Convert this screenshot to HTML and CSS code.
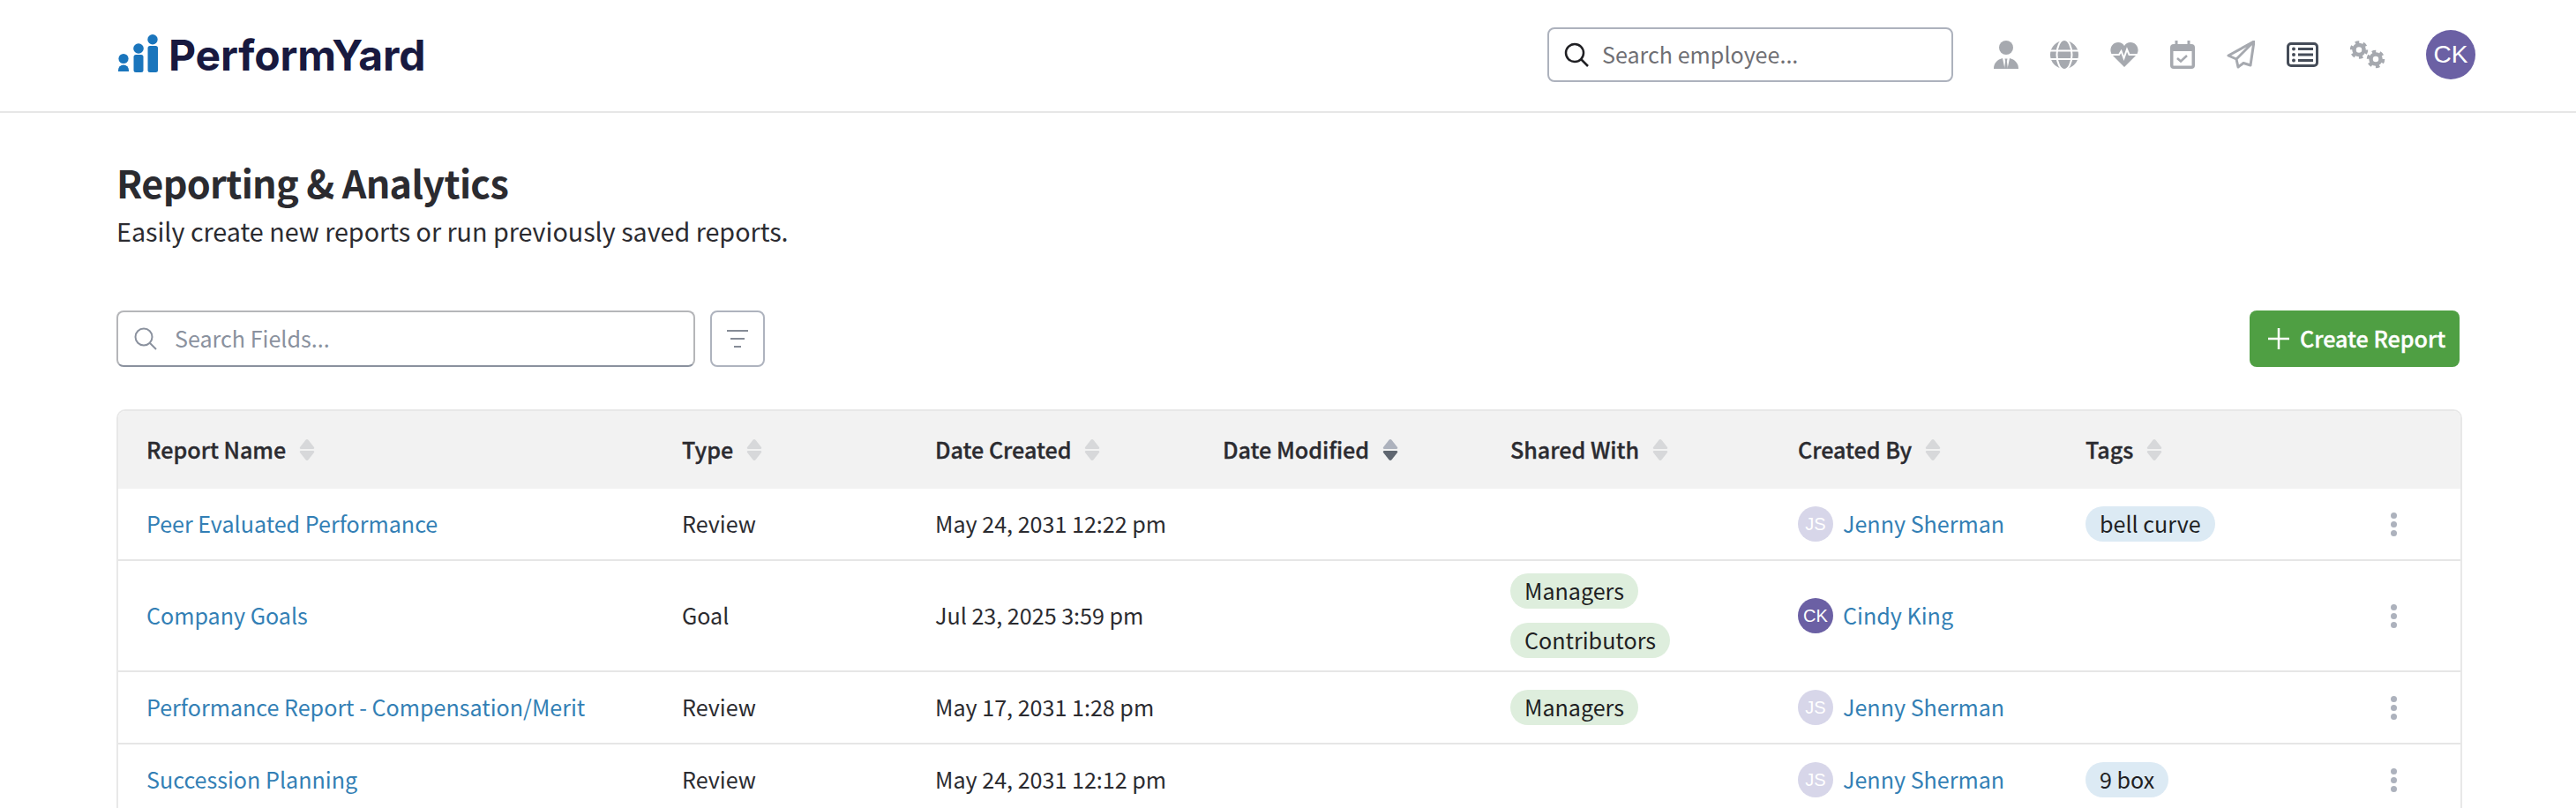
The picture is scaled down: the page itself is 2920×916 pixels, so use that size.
FILE: index.html
```html
<!DOCTYPE html>
<html lang="en">
<head>
<meta charset="utf-8">
<title>Reporting &amp; Analytics</title>
<link rel="stylesheet" href="styles.css">
</head>
<body>
<header class="topbar">
  <a class="logo">
    <svg class="logo-mark" width="45" height="43" viewBox="0 0 45 43"><g fill="#1a75bc"><circle cx="6" cy="27.5" r="5.6"/><path d="M0 43v-1.500a6 6 0 0 1 12 0V43z" transform="translate(0 -1)"/><circle cx="23" cy="16" r="5.8"/><rect x="17.500" y="23" width="11" height="20" rx="2.500"/><circle cx="39" cy="5.700" r="5.700"/><rect x="33.500" y="13" width="11.500" height="30" rx="2.500"/></g></svg>
    <span class="logo-text">PerformYard</span>
  </a>
  <label class="emp-search">
    <svg width="28" height="28" viewBox="0 0 28 28" fill="none" stroke="#1f1f23" stroke-width="2.500"><circle cx="12" cy="12" r="10"/><path d="M19 19l8 8"/></svg>
    <span>Search employee...</span>
  </label>
  <nav class="icons">
    <svg width="28" height="32" viewBox="0 0 28 32" fill="#a6a9af"><circle cx="14" cy="8" r="8"/><path d="M0 32c0-6.500 4-10.500 10-12l2.500 12zM28 32c0-6.500-4-10.500-10-12l-2.500 12z"/><path d="M12.500 20.500h3l-.6 3 1.100 8.500h-4l1.100-8.500z"/></svg>
    <svg width="32" height="32" viewBox="0 0 32 32"><circle cx="16" cy="16" r="16" fill="#a6a9af"/><g fill="none" stroke="#fff" stroke-width="2"><ellipse cx="16" cy="16" rx="8.500" ry="17"/><path d="M0 11.500h32M0 21h32"/></g></svg>
    <svg width="32" height="28" viewBox="0 0 32 28"><path fill="#a6a9af" d="M16 28 2 14C-2 8 2 0 9 0c3 0 5.500 1.500 7 4 1.500-2.500 4-4 7-4 7 0 11 8 7 14z"/><path fill="none" stroke="#fff" stroke-width="2" d="M0 14h10l2.500-4 3 8 3.500-10 2.500 6H32"/></svg>
    <svg width="28" height="32" viewBox="0 0 28 32"><rect y="4" width="28" height="28" rx="4" fill="#a6a9af"/><path stroke="#a6a9af" stroke-width="3" d="M7 0v6M21 0v6"/><rect x="3.500" y="12" width="21" height="16.500" fill="#fff"/><path fill="none" stroke="#a6a9af" stroke-width="2.500" d="M8 20l4 3.500 7-6.500"/></svg>
    <svg width="32" height="32" viewBox="0 0 32 32" fill="none" stroke="#a6a9af" stroke-width="3" stroke-linejoin="round"><path d="M31 1 2 17l9 4 2 9 6-4.500 8 2.500zM31 1 11 21"/></svg>
    <svg width="36" height="28" viewBox="0 0 36 28"><rect x="1.500" y="1.500" width="33" height="25" rx="3.500" fill="#fff" stroke="#454c58" stroke-width="3"/><g fill="#454c58"><circle cx="8" cy="7.500" r="2"/><circle cx="8" cy="14" r="2"/><circle cx="8" cy="20.500" r="2"/><rect x="13" y="6" width="17" height="3"/><rect x="13" y="12.500" width="17" height="3"/><rect x="13" y="19" width="17" height="3"/></g></svg>
    <svg width="40" height="32" viewBox="0 0 40 32" fill="none" stroke="#a6a9af"><g><circle cx="10" cy="10.500" r="5.500" stroke-width="4.500"/><circle cx="10" cy="10.500" r="8.500" stroke-width="3.500" stroke-dasharray="4.450 4.450"/></g><g><circle cx="29" cy="21" r="5.500" stroke-width="4.500"/><circle cx="29" cy="21" r="8.500" stroke-width="3.500" stroke-dasharray="4.450 4.450"/></g></svg>
  </nav>
  <div class="avatar avatar-lg">CK</div>
</header>

<main class="page">
  <h1 class="title">Reporting &amp; Analytics</h1>
  <p class="subtitle">Easily create new reports or run previously saved reports.</p>

  <div class="toolbar">
    <label class="field-search">
      <svg width="26" height="26" viewBox="0 0 26 26" fill="none" stroke="#8a919e" stroke-width="2"><circle cx="11" cy="11" r="9.500"/><path d="M18 18l7 7"/></svg>
      <span>Search Fields...</span>
    </label>
    <button class="filter-btn" type="button">
      <svg width="24" height="20" viewBox="0 0 24 20" fill="#858b96"><rect width="24" height="2"/><rect x="4" y="9" width="16" height="2"/><rect x="8" y="18" width="8" height="2"/></svg>
    </button>
    <button class="create-btn" type="button">
      <svg width="24" height="24" viewBox="0 0 24 24" stroke="#fff" stroke-width="2.500"><path d="M12 0v24M0 12h24"/></svg>
      <span>Create Report</span>
    </button>
  </div>

  <div class="table-wrap">
    <table class="reports">
      <colgroup>
        <col class="c-name"><col class="c-type"><col class="c-date"><col class="c-date"><col class="c-date"><col class="c-date"><col class="c-date"><col class="c-menu">
      </colgroup>
      <thead>
        <tr>
          <th><span class="th">Report Name<svg class="sort" width="18" height="24" viewBox="0 0 18 24"><path class="up" d="M9 0c.6 0 1.100.3 1.500.8L17 9c.6.8.1 2-1 2H2C.9 11 .4 9.800 1 9L7.500.8C7.900.3 8.400 0 9 0z"/><path class="down" d="M9 24c.6 0 1.100-.3 1.500-.8L17 15c.6-.8.1-2-1-2H2c-1.100 0-1.600 1.200-1 2l6.500 8.200c.4.500.9.800 1.500.8z"/></svg></span></th>
          <th><span class="th">Type<svg class="sort" width="18" height="24" viewBox="0 0 18 24"><path class="up" d="M9 0c.6 0 1.100.3 1.500.8L17 9c.6.8.1 2-1 2H2C.9 11 .4 9.800 1 9L7.500.8C7.900.3 8.400 0 9 0z"/><path class="down" d="M9 24c.6 0 1.100-.3 1.500-.8L17 15c.6-.8.1-2-1-2H2c-1.100 0-1.600 1.200-1 2l6.500 8.200c.4.500.9.800 1.500.8z"/></svg></span></th>
          <th><span class="th">Date Created<svg class="sort" width="18" height="24" viewBox="0 0 18 24"><path class="up" d="M9 0c.6 0 1.100.3 1.500.8L17 9c.6.8.1 2-1 2H2C.9 11 .4 9.800 1 9L7.500.8C7.900.3 8.400 0 9 0z"/><path class="down" d="M9 24c.6 0 1.100-.3 1.500-.8L17 15c.6-.8.1-2-1-2H2c-1.100 0-1.600 1.200-1 2l6.500 8.200c.4.500.9.800 1.500.8z"/></svg></span></th>
          <th><span class="th">Date Modified<svg class="sort sort-active" width="18" height="24" viewBox="0 0 18 24"><path class="up" d="M9 0c.6 0 1.100.3 1.500.8L17 9c.6.8.1 2-1 2H2C.9 11 .4 9.800 1 9L7.500.8C7.900.3 8.400 0 9 0z"/><path class="down" d="M9 24c.6 0 1.100-.3 1.500-.8L17 15c.6-.8.1-2-1-2H2c-1.100 0-1.600 1.200-1 2l6.500 8.200c.4.500.9.800 1.500.8z"/></svg></span></th>
          <th><span class="th">Shared With<svg class="sort" width="18" height="24" viewBox="0 0 18 24"><path class="up" d="M9 0c.6 0 1.100.3 1.500.8L17 9c.6.8.1 2-1 2H2C.9 11 .4 9.800 1 9L7.500.8C7.900.3 8.400 0 9 0z"/><path class="down" d="M9 24c.6 0 1.100-.3 1.500-.8L17 15c.6-.8.1-2-1-2H2c-1.100 0-1.600 1.200-1 2l6.500 8.200c.4.500.9.800 1.500.8z"/></svg></span></th>
          <th><span class="th">Created By<svg class="sort" width="18" height="24" viewBox="0 0 18 24"><path class="up" d="M9 0c.6 0 1.100.3 1.500.8L17 9c.6.8.1 2-1 2H2C.9 11 .4 9.800 1 9L7.500.8C7.900.3 8.400 0 9 0z"/><path class="down" d="M9 24c.6 0 1.100-.3 1.500-.8L17 15c.6-.8.1-2-1-2H2c-1.100 0-1.600 1.200-1 2l6.500 8.200c.4.500.9.800 1.500.8z"/></svg></span></th>
          <th><span class="th">Tags<svg class="sort" width="18" height="24" viewBox="0 0 18 24"><path class="up" d="M9 0c.6 0 1.100.3 1.500.8L17 9c.6.8.1 2-1 2H2C.9 11 .4 9.800 1 9L7.500.8C7.900.3 8.400 0 9 0z"/><path class="down" d="M9 24c.6 0 1.100-.3 1.500-.8L17 15c.6-.8.1-2-1-2H2c-1.100 0-1.600 1.200-1 2l6.500 8.200c.4.500.9.800 1.500.8z"/></svg></span></th>
          <th></th>
        </tr>
      </thead>
      <tbody>
        <tr>
          <td><a class="link">Peer Evaluated Performance</a></td>
          <td>Review</td>
          <td>May 24, 2031 12:22 pm</td>
          <td></td>
          <td></td>
          <td><span class="person"><span class="avatar avatar-sm avatar-light">JS</span><a class="link">Jenny Sherman</a></span></td>
          <td><span class="pill pill-blue">bell curve</span></td>
          <td><span class="kebab"><i></i><i></i><i></i></span></td>
        </tr>
        <tr>
          <td><a class="link">Company Goals</a></td>
          <td>Goal</td>
          <td>Jul 23, 2025 3:59 pm</td>
          <td></td>
          <td><span class="pills"><span class="pill pill-green">Managers</span><span class="pill pill-green">Contributors</span></span></td>
          <td><span class="person"><span class="avatar avatar-sm">CK</span><a class="link">Cindy King</a></span></td>
          <td></td>
          <td><span class="kebab"><i></i><i></i><i></i></span></td>
        </tr>
        <tr>
          <td><a class="link">Performance Report - Compensation/Merit</a></td>
          <td>Review</td>
          <td>May 17, 2031 1:28 pm</td>
          <td></td>
          <td><span class="pill pill-green">Managers</span></td>
          <td><span class="person"><span class="avatar avatar-sm avatar-light">JS</span><a class="link">Jenny Sherman</a></span></td>
          <td></td>
          <td><span class="kebab"><i></i><i></i><i></i></span></td>
        </tr>
        <tr>
          <td><a class="link">Succession Planning</a></td>
          <td>Review</td>
          <td>May 24, 2031 12:12 pm</td>
          <td></td>
          <td></td>
          <td><span class="person"><span class="avatar avatar-sm avatar-light">JS</span><a class="link">Jenny Sherman</a></span></td>
          <td><span class="pill pill-blue">9 box</span></td>
          <td><span class="kebab"><i></i><i></i><i></i></span></td>
        </tr>
      </tbody>
    </table>
  </div>
</main>
</body>
</html>
```
FILE: styles.css
```css
* { box-sizing: border-box; }
html, body { margin: 0; height: 916px; overflow: hidden; }
body {
  background: #fff;
  color: #2b2b30;
  font-family: "Noto Sans CJK SC", "Noto Sans", sans-serif;
  font-size: 25.1px;
  line-height: 40px;
}

.topbar {
  display: flex;
  align-items: center;
  height: 128px;
  padding: 0 114px 2px 134px;
  border-bottom: 2px solid #e6e6e6;
}
.logo { display: flex; align-items: flex-start; gap: 12px; margin-right: auto; }
.logo-mark { display: block; margin-top: -3px; }
.logo-text {
  margin-top: 1px;
  font-family: Inter, "Liberation Sans", sans-serif;
  font-weight: 700;
  font-size: 48px;
  line-height: 40px;
  letter-spacing: -.15px;
  color: #18193f;
}
.emp-search {
  display: flex;
  align-items: center;
  gap: 15px;
  width: 460px;
  height: 62px;
  padding: 0 17px;
  border: 2px solid #adb2bd;
  border-radius: 8px;
  color: #6f6f74;
}
.emp-search span, .field-search span, .create-btn span { margin-top: -3px; }
.icons { display: flex; align-items: center; gap: 36px; margin: 0 46px; }
.icons svg { display: block; }

.avatar {
  display: flex;
  align-items: center;
  justify-content: center;
  flex: none;
  border-radius: 50%;
  background: #6b60a4;
  color: #fff;
  font-family: "Liberation Sans", sans-serif;
}
.avatar-lg { width: 56px; height: 56px; font-size: 28px; }
.avatar-sm { width: 40px; height: 40px; font-size: 20px; }
.avatar-light { background: #d7d6e9; }

.page { padding: 48px 129px 0 132px; }
.title { margin: 0; font-size: 43.2px; line-height: 60px; font-weight: 600; letter-spacing: -.7px; }
.subtitle { margin: 4px 0 0; font-size: 28.7px; line-height: 44px; }

.toolbar { display: flex; align-items: center; gap: 17px; margin: 68px 3px 0 0; }
.field-search {
  display: flex;
  align-items: center;
  gap: 20px;
  width: 656px;
  height: 64px;
  padding: 0 18px;
  border: 2px solid #b5b6b9;
  border-bottom-color: #8a919e;
  border-radius: 8px;
  color: #8a919e;
}
.filter-btn {
  display: flex;
  align-items: center;
  justify-content: center;
  width: 62px;
  height: 64px;
  padding: 0;
  background: #fff;
  border: 2px solid #aeb3be;
  border-radius: 8px;
}
.create-btn {
  display: flex;
  align-items: center;
  gap: 12px;
  width: 238px;
  height: 64px;
  margin-left: auto;
  padding: 0 0 0 21px;
  border: 0;
  border-radius: 8px;
  background: #4f9f43;
  color: #fff;
  white-space: nowrap;
  font: 500 25.1px/40px "Noto Sans CJK SC", "Noto Sans", sans-serif;
  -webkit-text-stroke: .35px #fff;
}

.table-wrap {
  margin-top: 48px;
  width: 2659px;
  border: 2px solid #e8e8e8;
  border-bottom: 0;
  border-radius: 10px 10px 0 0;
  overflow: hidden;
}
.reports { width: 100%; table-layout: fixed; border-collapse: separate; border-spacing: 0; }
.c-name { width: 606px; }
.c-type { width: 287px; }
.c-date { width: 326px; }
.c-menu { width: auto; }
.reports th {
  height: 88px;
  padding: 0 0 2px 33px;
  background: #f2f2f2;
  text-align: left;
  font-weight: 500;
  -webkit-text-stroke: .35px #2b2b30;
}
.reports th:first-child { padding-left: 32px; }
.reports td {
  height: 82px;
  padding: 13px 0 15px 33px;
  border-bottom: 2px solid #e6e6e6;
  vertical-align: middle;
}
.reports td:first-child { padding-left: 32px; }
.th { display: inline-flex; align-items: center; gap: 15px; }
.sort { display: block; flex: none; transform: translateY(1px); }
.sort .up, .sort .down { fill: #d7d8da; }
.sort-active .up { fill: #adb2bd; }
.sort-active .down { fill: #5f6670; }

.link { color: #337fb5; }
.person { display: flex; align-items: center; gap: 11px; }
.person .avatar, .pill, .kebab { transform: translateY(1px); }
.pills { display: flex; flex-direction: column; align-items: flex-start; gap: 16px; }
.pill {
  display: inline-block;
  height: 40px;
  padding: 0 16px;
  border-radius: 20px;
  color: #1f1f23;
  line-height: 38px;
  vertical-align: top;
}
.pill-green { background: #deeedd; }
.pill-blue { background: #dceaf4; }
.kebab { display: flex; flex-direction: column; align-items: center; gap: 3px; width: 8px; margin-left: 19px; }
.kebab i { display: block; width: 7px; height: 7px; border-radius: 50%; background: #adb2bd; }
```
